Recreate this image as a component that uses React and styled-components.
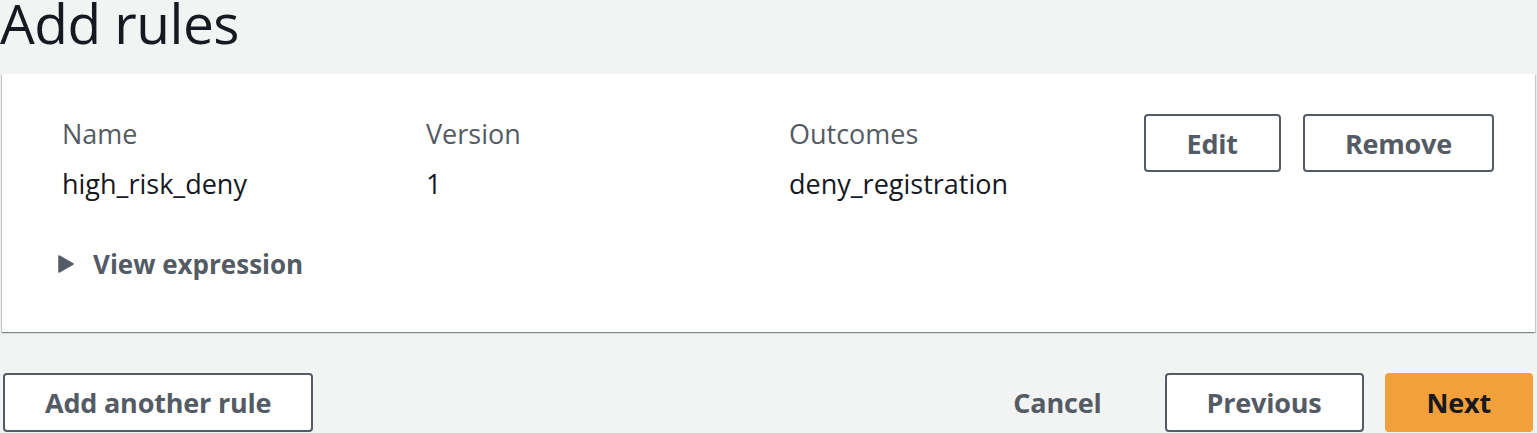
import React from 'react'
import styled, {createGlobalStyle} from 'styled-components'

const Global = createGlobalStyle`
    html, body {
        margin          : 0;
        padding         : 0;
        background      : #f2f3f3;
        font-family     : "Open Sans", "Noto Sans", sans-serif;
        color           : #16191f;
    }
`

const Page = styled.div`
    width           : 1537px;
    height          : 433px;
    overflow        : hidden;
    display         : flex;
    flex-direction  : column;
`

const Title = styled.h1`
    margin          : 0 0 29px 0;
    font-size       : 55px;
    line-height     : 45px;
    font-weight     : 400;
    letter-spacing  : -0.5px;
    color           : #16191f;
`

const Panel = styled.div`
    margin          : 0 2px;
    background      : white;
    padding         : 40px 41px 48px 60px;
    box-shadow      : 0 1px 1px 0 rgba(0,28,36,0.3), 1px 1px 1px 0 rgba(0,28,36,0.15), -1px 1px 1px 0 rgba(0,28,36,0.15);
`

const Row = styled.div`
    display         : flex;
    align-items     : flex-start;
`

const Column = styled.div`
    width           : ${p=>p.width};
    display         : flex;
    flex-direction  : column;
`

const Label = styled.div`
    font-size       : 27px;
    line-height     : 40px;
    color           : #545b64;
`

const Value = styled.div`
    font-size       : 27px;
    line-height     : 40px;
    margin-top      : 10px;
    color           : #16191f;
`

const Actions = styled.div`
    margin-left     : auto;
    display         : flex;
    gap             : 22px;
`

const Button = styled.button`
    height          : ${p=>p.h ?? '58px'};
    padding         : 0 ${p=>p.pad ?? '40px'};
    border          : 2px solid ${p=>p.primary ? '#f1a03b' : p.link ? 'transparent' : '#545b64'};
    border-radius   : 4px;
    background      : ${p=>p.primary ? '#f1a03b' : p.link ? 'transparent' : 'white'};
    color           : ${p=>p.primary ? '#16191f' : '#545b64'};
    font-family     : "Open Sans", "Noto Sans", sans-serif;
    font-size       : 27px;
    font-weight     : 700;
    letter-spacing  : -0.2px;
    cursor          : pointer;
`

const Expander = styled.div`
    display         : flex;
    align-items     : center;
    margin          : 40px 0 0 -4px;
    height          : 40px;
    gap             : 19px;
    font-size       : 26px;
    font-weight     : 700;
    color           : #545b64;
`

const Footer = styled.div`
    display         : flex;
    align-items     : center;
    margin          : 41px 4px 0 3px;
    gap             : 21px;
`

const Spacer = styled.div`
    flex            : 1;
`

const Caret = () => <svg width="16" height="18" viewBox="0 0 16 18">
    <path d="M1 1 L15 9 L1 17 Z" fill="#545b64" stroke="#545b64" strokeWidth="1.5" strokeLinejoin="round"/>
</svg>

const App = () => {
    return <Page>
        <Global/>
        <Title>Add rules</Title>
        <Panel>
            <Row>
                <Column width='364px'>
                    <Label>Name</Label>
                    <Value>high_risk_deny</Value>
                </Column>
                <Column width='363px'>
                    <Label>Version</Label>
                    <Value>1</Value>
                </Column>
                <Column width='300px'>
                    <Label>Outcomes</Label>
                    <Value>deny_registration</Value>
                </Column>
                <Actions>
                    <Button pad='41px'>Edit</Button>
                    <Button>Remove</Button>
                </Actions>
            </Row>
            <Expander>
                <Caret/>
                View expression
            </Expander>
        </Panel>
        <Footer>
            <Button h='59px'>Add another rule</Button>
            <Spacer/>
            <Button link h='59px'>Cancel</Button>
            <Button h='59px'>Previous</Button>
            <Button primary h='59px'>Next</Button>
        </Footer>
    </Page>
}

export default App
